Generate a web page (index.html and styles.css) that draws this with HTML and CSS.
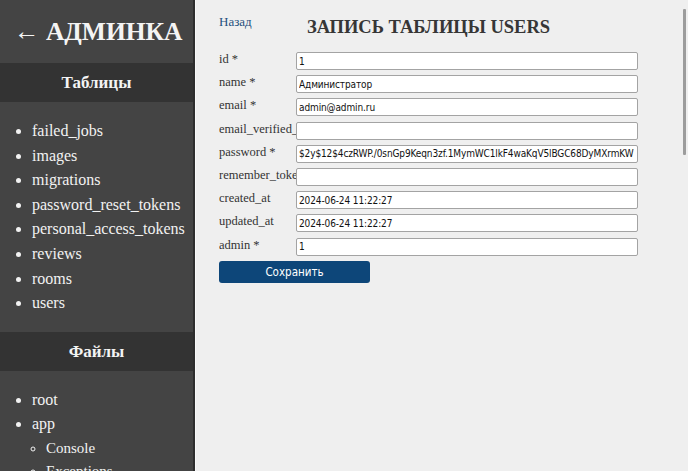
FILE: index.html
```html
<!DOCTYPE html>
<html lang="ru">
<head>
<meta charset="utf-8">
<title>Админка</title>
<link rel="stylesheet" href="styles.css">
</head>
<body>
<aside class="sidebar">
  <div class="brand">← АДМИНКА</div>
  <h3 class="band">Таблицы</h3>
  <ul class="nav">
    <li>failed_jobs</li>
    <li>images</li>
    <li>migrations</li>
    <li>password_reset_tokens</li>
    <li>personal_access_tokens</li>
    <li>reviews</li>
    <li>rooms</li>
    <li>users</li>
  </ul>
  <h3 class="band">Файлы</h3>
  <ul class="nav">
    <li>root</li>
    <li>app
      <ul class="sub">
        <li>Console</li>
        <li>Exceptions</li>
      </ul>
    </li>
  </ul>
</aside>
<main class="content">
  <div class="head">
    <a class="back" href="#">Назад</a>
    <h2 class="title">ЗАПИСЬ ТАБЛИЦЫ USERS</h2>
  </div>
  <form class="form">
    <label class="lbl">id *</label><input class="inp" value="1">
    <label class="lbl">name *</label><input class="inp" value="Администратор">
    <label class="lbl">email *</label><input class="inp" value="admin@admin.ru">
    <label class="lbl">email_verified_at</label><input class="inp" value="">
    <label class="lbl">password *</label><input class="inp" value="$2y$12$4czRWP./0snGp9Keqn3zf.1MymWC1lkF4waKqV5lBGC68DyMXrmKW">
    <label class="lbl">remember_token</label><input class="inp" value="">
    <label class="lbl">created_at</label><input class="inp" value="2024-06-24 11:22:27">
    <label class="lbl">updated_at</label><input class="inp" value="2024-06-24 11:22:27">
    <label class="lbl">admin *</label><input class="inp" value="1">
    <button class="save" type="button">Сохранить</button>
  </form>
</main>
<div class="scrollthumb"></div>
</body>
</html>
```

FILE: styles.css
```css
html, body {
  margin: 0;
  height: 100%;
}
body {
  display: flex;
  height: 471px;
  overflow: hidden;
  background: #efefef;
  font-family: "Liberation Serif", "Times New Roman", serif;
}
.sidebar {
  width: 193px;
  flex: none;
  background: #444444;
  border-right: 2px solid #2d2d2d;
  color: #f2f2f2;
  overflow: hidden;
}
.brand {
  height: 63px;
  display: flex;
  align-items: center;
  padding-left: 14px;
  font-size: 25.5px;
  font-weight: bold;
  color: #f4f4f4;
  white-space: nowrap;
}
.band {
  margin: 0;
  height: 39px;
  line-height: 39px;
  background: #333333;
  text-align: center;
  font-size: 17px;
  font-weight: bold;
  color: #f4f4f4;
}
.nav {
  margin: 17px 0 16px;
  padding-left: 32px;
  list-style: disc;
  font-size: 16px;
  line-height: 24.6px;
}
.nav .sub {
  margin: 0;
  padding-left: 14px;
  list-style: circle;
  font-size: 15px;
  line-height: 23px;
}
.content {
  flex: 1;
  padding: 14px 0 0 23px;
  border-left: 1px solid #f8f8f8;
}
.head {
  width: 419px;
  display: grid;
  grid-template-columns: 1fr auto 1fr;
  align-items: start;
}
.back {
  font-size: 13px;
  line-height: 16px;
  color: #24507e;
  text-decoration: none;
}
.title {
  margin: 0;
  padding-top: 1px;
  font-size: 18.5px;
  line-height: 24px;
  font-weight: bold;
  color: #363636;
}
.form {
  margin-top: 13px;
  width: 419px;
  display: grid;
  grid-template-columns: 77px 342px;
  row-gap: 5.2px;
}
.lbl {
  font-size: 12.5px;
  line-height: 15px;
  color: #333;
  white-space: nowrap;
  overflow: hidden;
}
.inp {
  box-sizing: border-box;
  height: 18px;
  margin: 0;
  padding: 0 2px;
  border: 1px solid #a3a3a3;
  border-radius: 2px;
  background: #fff;
  font-family: "DejaVu Sans Condensed", "DejaVu Sans", sans-serif;
  font-size: 10px;
  letter-spacing: -0.12px;
  color: #111;
  min-width: 0;
  width: 342px;
}
.save {
  grid-column: 1 / 3;
  width: 151px;
  height: 22px;
  margin-top: 0.5px;
  border: none;
  border-radius: 3px;
  background: #0d4679;
  color: #fff;
  font-family: "DejaVu Sans Condensed", "DejaVu Sans", sans-serif;
  font-size: 11.5px;
  padding: 0;
}
.scrollthumb {
  position: absolute;
  left: 683px;
  top: 9px;
  width: 3px;
  height: 146px;
  background: #9c9c9c;
  border-radius: 1px;
}
```
